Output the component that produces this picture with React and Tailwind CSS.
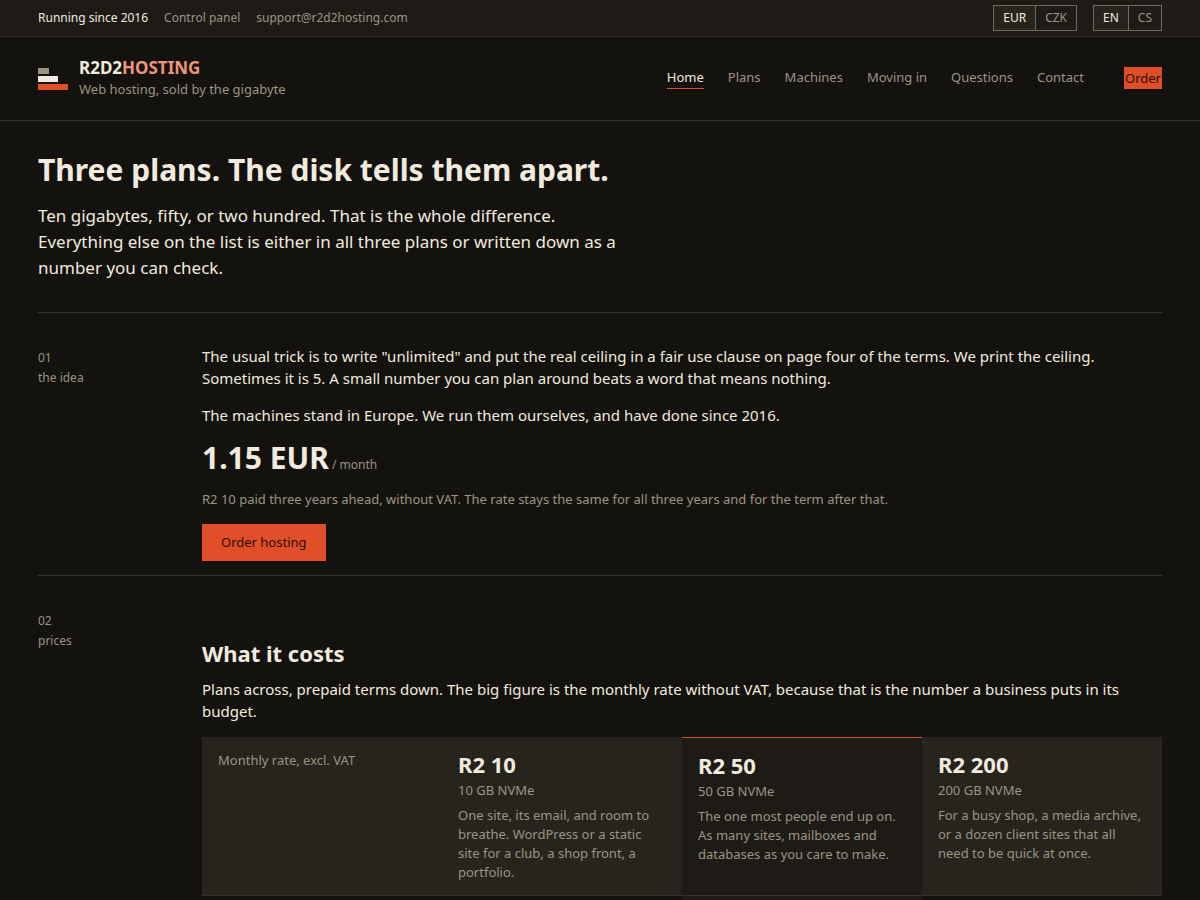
const NAV = [
  { label: 'Home', href: '#home', current: true },
  { label: 'Plans', href: '#plans' },
  { label: 'Machines', href: '#machines' },
  { label: 'Moving in', href: '#moving' },
  { label: 'Questions', href: '#questions' },
  { label: 'Contact', href: '#contact' },
];

const PLANS = [
  {
    name: 'R2 10',
    disk: '10 GB NVMe',
    text: 'One site, its email, and room to breathe. WordPress or a static site for a club, a shop front, a portfolio.',
  },
  {
    name: 'R2 50',
    disk: '50 GB NVMe',
    text: 'The one most people end up on. As many sites, mailboxes and databases as you care to make.',
    featured: true,
  },
  {
    name: 'R2 200',
    disk: '200 GB NVMe',
    text: 'For a busy shop, a media archive, or a dozen client sites that all need to be quick at once.',
  },
];

// Two-way switch, first option is the selected one
function Switch({ label, options }) {
  return (
    <div role="group" aria-label={label} className="flex border border-[#6f6a5a]">
      {options.map((option, i) => (
        <button
          key={option}
          type="button"
          aria-pressed={i === 0}
          className={`h-6 px-[9px] text-xs ${
            i === 0 ? 'bg-[#27241e] text-[#f1ebdf]' : 'border-l border-[#6f6a5a] text-[#9b9483]'
          }`}
        >
          {option}
        </button>
      ))}
    </div>
  );
}

function Logo() {
  return (
    <svg width="30" height="22" viewBox="0 0 30 22" aria-hidden="true">
      <rect width="11" height="6" fill="#9b9483" />
      <rect y="8" width="20" height="6" fill="#f1ebdf" />
      <rect y="16" width="30" height="6" fill="#e04e2a" />
    </svg>
  );
}

function Section({ number, label, children }) {
  return (
    <section className="grid grid-cols-[140px_1fr] gap-x-6 border-t border-[#36322a] pt-8 pb-[14px]">
      <div className="pt-[3px] text-xs leading-5 text-[#9b9483]">
        <div>{number}</div>
        <div>{label}</div>
      </div>
      <div>{children}</div>
    </section>
  );
}

export default function App() {
  return (
    <div className="min-h-screen bg-[#14120e] font-['Noto_Sans',sans-serif] text-[15px] leading-[22px] text-[#f1ebdf]">
      {/* Utility bar */}
      <div className="flex items-center justify-between border-b border-[#36322a] bg-[#1e1b16] px-[38px] py-[5px] text-xs">
        <div className="flex gap-4">
          <span>Running since 2016</span>
          <a href="#panel" className="text-[#9b9483]">Control panel</a>
          <a href="mailto:support@r2d2hosting.com" className="text-[#9b9483]">support@r2d2hosting.com</a>
        </div>
        <div className="flex gap-4">
          <Switch label="Currency" options={['EUR', 'CZK']} />
          <Switch label="Language" options={['EN', 'CS']} />
        </div>
      </div>

      <header className="flex items-center justify-between border-b border-[#36322a] px-[38px] py-5">
        <a href="#home" className="flex items-center gap-[11px]">
          <Logo />
          <span className="flex flex-col">
            <span className="text-[17px] leading-[22px] font-bold">
              R2D2<span className="text-[#f0957a]">HOSTING</span>
            </span>
            <span className="text-[13px] leading-[21px] text-[#9b9483]">Web hosting, sold by the gigabyte</span>
          </span>
        </a>
        <nav className="flex items-center gap-6 pb-px text-[13px] leading-5">
          {NAV.map((item) => (
            <a
              key={item.label}
              href={item.href}
              className={`border-b pb-px ${
                item.current ? 'border-b-[#e04e2a] text-[#f1ebdf]' : 'border-b-transparent text-[#9b9483]'
              }`}
            >
              {item.label}
            </a>
          ))}
          <a href="#order" className="ml-4 bg-[#e04e2a] px-px py-px text-[#2a0f06]">Order</a>
        </nav>
      </header>

      <main className="px-[38px]">
        <div className="pt-7 pb-[31px]">
          <h1 className="mb-3 text-[30px] leading-[42px] font-bold">Three plans. The disk tells them apart.</h1>
          <p className="max-w-[600px] text-[17px] leading-[26px]">
            Ten gigabytes, fifty, or two hundred. That is the whole difference. Everything else on the list is
            either in all three plans or written down as a number you can check.
          </p>
        </div>

        <Section number="01" label="the idea">
          <p className="mb-[15px]">
            The usual trick is to write "unlimited" and put the real ceiling in a fair use clause on page four of
            the terms. We print the ceiling. Sometimes it is 5. A small number you can plan around beats a word
            that means nothing.
          </p>
          <p className="mb-[14px]">The machines stand in Europe. We run them ourselves, and have done since 2016.</p>
          <p className="mb-[13px] text-[30px] leading-9 font-bold">
            1.15 EUR<span className="text-xs font-normal text-[#9b9483]"> / month</span>
          </p>
          <p className="mb-[15px] text-[13px] leading-5 text-[#9b9483]">
            R2 10 paid three years ahead, without VAT. The rate stays the same for all three years and for the
            term after that.
          </p>
          <a href="#order" className="inline-block bg-[#e04e2a] px-[19px] py-2 text-[13px] leading-[21px] text-[#2a0f06]">
            Order hosting
          </a>
        </Section>

        <Section number="02" label="prices">
          <h2 className="mt-[31px] mb-[11px] text-[22px] leading-7 font-bold">What it costs</h2>
          <p className="mb-[15px]">
            Plans across, prepaid terms down. The big figure is the monthly rate without VAT, because that is the
            number a business puts in its budget.
          </p>
          <table className="w-full table-fixed border-separate border-spacing-0 text-left text-[13px] leading-[19px] text-[#9b9483]">
            <thead>
              <tr>
                <th scope="col" className="border-b border-[#36322a] bg-[#27241e] px-4 py-[14px] align-top font-normal">
                  Monthly rate, excl. VAT
                </th>
                {PLANS.map((plan) => (
                  <th
                    key={plan.name}
                    scope="col"
                    className={`border-b border-b-[#36322a] px-4 pt-[14px] pb-[13px] align-top font-normal ${
                      plan.featured ? 'border-t border-t-[#e04e2a] bg-[#1e1b16]' : 'bg-[#27241e]'
                    }`}
                  >
                    <span className="block text-[22px] leading-[26px] font-bold text-[#f1ebdf]">{plan.name}</span>
                    <span className="mt-1 mb-[6px] block">{plan.disk}</span>
                    <span className="block">{plan.text}</span>
                  </th>
                ))}
              </tr>
            </thead>
            <tbody>
              <tr>
                <td className="h-8" />
                <td />
                <td className="bg-[#1e1b16]" />
                <td />
              </tr>
            </tbody>
          </table>
        </Section>
      </main>
    </div>
  );
}
